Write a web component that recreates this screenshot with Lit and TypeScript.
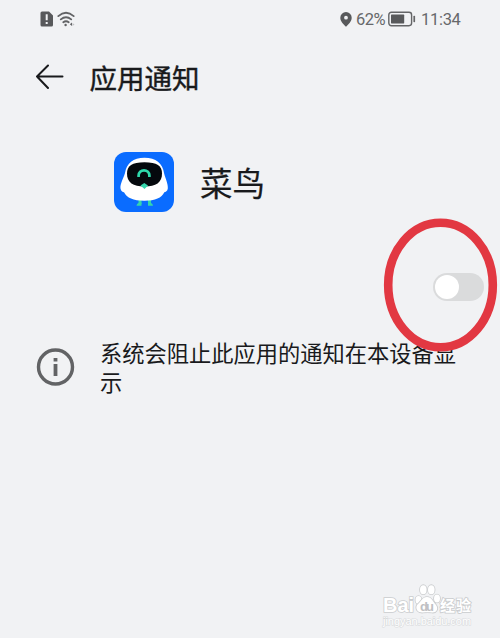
import { LitElement, html, css } from "lit";
import { customElement, property } from "lit/decorators.js";

@customElement("status-bar")
class StatusBar extends LitElement {
  static styles = css`
    :host { display: flex; align-items: center; height: 38px; padding: 0 40px; color: #67686a; box-sizing: border-box; font: 16.5px/20px Roboto, "Noto Sans", sans-serif; }
    svg { display: block; flex: none; }
    .sim { margin-right: 4px; }
    .spacer { flex: 1; }
    .pin { margin-right: 4px; }
    .percent { width: 29px; letter-spacing: -0.5px; white-space: nowrap; }
    .battery { margin: 0 5px 0 3px; }
    .time { width: 39px; letter-spacing: -0.3px; white-space: nowrap; }
    .percent, .time { padding-top: 1px; }
  `;
  render() {
    return html`
      <svg class="sim" width="13" height="16" viewBox="0 0 13 16">
        <path d="M2 .5H9L13 4.500V14a1.500 1.500 0 0 1-1.500 1.500H2A1.500 1.500 0 0 1 .5 14V2A1.500 1.500 0 0 1 2 .5Z" fill="#58595b" />
        <path d="M5.700 3.300H7.700V9.300H5.700ZM5.700 11H7.700V13H5.700Z" fill="#f1f2f4" />
      </svg>
      <svg width="18" height="16" viewBox="0 0 18 16" fill="none" stroke="#626365" stroke-width="1.800" stroke-linecap="round">
        <path d="M1.300 5.100Q9 -1.500 16.700 5.100M3.800 8.400Q9 4 14.200 8.400M6.300 11.300Q9 9.200 11.700 11.300" />
        <circle cx="8.600" cy="14" r="1.200" fill="#626365" stroke="none" />
        <path d="M12.800 13.200L15 11.500V15Z" fill="#626365" stroke="none" />
        <path d="M15.500 12V15L17.500 13.600Z" fill="#bfc0c2" stroke="none" />
      </svg>
      <span class="spacer"></span>
      <svg class="pin" width="12" height="15" viewBox="0 0 12 15">
        <path fill-rule="evenodd" d="M6 0a5.700 5.700 0 0 1 5.700 5.700C11.700 9.500 8 12.700 6 14.800 4 12.700.3 9.500.3 5.700A5.700 5.700 0 0 1 6 0ZM6 3.800a1.900 1.900 0 1 0 0 3.800 1.900 1.900 0 0 0 0-3.800Z" fill="#58595b" />
      </svg>
      <span class="percent">62%</span>
      <svg class="battery" width="28" height="16" viewBox="0 0 28 16">
        <rect x=".8" y="1.300" width="22.800" height="13.400" rx="2.600" fill="none" stroke="#646567" stroke-width="1.400" />
        <rect x="3" y="3.600" width="13.200" height="8.800" rx=".6" fill="#58595b" />
        <rect x="25.400" y="4.800" width="1.700" height="6.500" rx=".7" fill="#646567" />
      </svg>
      <span class="time">11:34</span>
    `;
  }
}

@customElement("toggle-switch")
class ToggleSwitch extends LitElement {
  @property({ type: Boolean }) checked = false;
  static styles = css`
    :host { display: block; }
    .track { display: flex; width: 51px; height: 28px; padding: 2px; border-radius: 14px; background: #dadbdc; box-sizing: border-box; }
    .track.on { justify-content: flex-end; background: #0a6cff; }
    .thumb { width: 24px; height: 24px; border-radius: 50%; background: #fff; }
  `;
  render() {
    return html`<div class="track ${this.checked ? "on" : ""}"><div class="thumb"></div></div>`;
  }
}

@customElement("app-root")
class AppRoot extends LitElement {
  static styles = css`
    :host { display: block; position: relative; width: 500px; height: 638px; overflow: hidden; background: #f1f2f4; color: #191a1c; font-family: "Noto Sans CJK SC", sans-serif; }
    svg { display: block; flex: none; }
    .header { display: flex; align-items: center; height: 80px; padding-left: 36px; box-sizing: border-box; }
    .title { margin: -2px 0 0 25.5px; font-size: 27.5px; line-height: 40px; font-weight: 400; -webkit-text-stroke: 0.4px #191a1c; }
    .app { display: flex; align-items: center; height: 60px; margin-top: 34px; padding-left: 114px; }
    .name { margin-left: 26px; font-size: 32.5px; line-height: 48px; -webkit-text-stroke: 0.2px #191a1c; }
    .row { display: flex; justify-content: flex-end; margin-top: 61px; padding-right: 16px; }
    .note { display: flex; align-items: center; margin-top: 37px; padding-left: 36px; }
    .text { width: 358px; margin: 0 0 0 25px; font-size: 22.25px; line-height: 29px; }
    .ring { position: absolute; left: 380px; top: 214px; }
    .mark { position: absolute; left: 380px; top: 580px; }
    .brand { font: bold 21px "Liberation Sans", sans-serif; }
    .du { font: bold 13px "Liberation Sans", sans-serif; }
    .cn { font: bold 15px "Noto Sans CJK SC", sans-serif; }
    .url { font: 10.5px "Liberation Sans", sans-serif; }
  `;
  render() {
    return html`
      <status-bar></status-bar>
      <div class="header">
        <svg width="28" height="28" viewBox="0 0 28 28" fill="none" stroke="#191a1c" stroke-width="2" stroke-linecap="round" stroke-linejoin="round">
          <path d="M26.500 12.500H1M12 1.500L1 12.500 12 24" />
        </svg>
        <h1 class="title">应用通知</h1>
      </div>
      <div class="app">
        <svg width="60" height="60" viewBox="0 0 60 60">
          <rect width="60" height="60" rx="12" fill="#0a6cff" />
          <path d="M26 47V52M35.500 47V52" stroke="#35d6ac" stroke-width="3" />
          <path d="M22.500 53.800Q23 50.500 27.500 50.500V53.800ZM34 53.800V50.500Q38.500 50.500 39 53.800Z" fill="#35d6ac" />
          <path d="M30.500 5.800C42 5.800 48.500 11.500 50 21 51.500 27 54.300 32 53.800 36.500 53.500 39.300 51.500 40 50.300 40.300 47.500 46 41.500 48.700 30.300 48.700S13 46 10 40.300C8.500 40 7 39.300 6.500 36.500 6 32 9.200 27 11 21 12.500 11.500 19 5.800 30.500 5.800Z" fill="#fff" />
          <path d="M30.500 10.200C43 10.200 48 13.500 48 21.500 48 30.500 42 34.500 30.500 34.500S13 30.500 13 21.500C13 13.500 18 10.200 30.500 10.200Z" fill="#05090d" />
          <path d="M24.600 25V23.500a5.400 5.200 0 0 1 10.800 0V25" fill="none" stroke="#2fd9ac" stroke-width="2.700" />
          <path d="M26.500 33.500L30.300 31 34 33.500 30.500 37Z" fill="#36d5ab" />
        </svg>
        <span class="name">菜鸟</span>
      </div>
      <div class="row"><toggle-switch></toggle-switch></div>
      <div class="note">
        <svg width="39" height="39" viewBox="0 0 39 39">
          <circle cx="19.500" cy="19" r="17" fill="none" stroke="#626365" stroke-width="3.400" />
          <path d="M17.600 10H21.400V13.500H17.600ZM17.600 16H21.400V28H17.600Z" fill="#626365" />
        </svg>
        <p class="text">系统会阻止此应用的通知在本设备显示</p>
      </div>
      <svg class="ring" width="120" height="142" viewBox="0 0 120 142">
        <ellipse cx="60.500" cy="71" rx="52.300" ry="62.300" fill="none" stroke="#e23842" stroke-width="8.600" />
      </svg>
      <svg class="mark" width="120" height="54" viewBox="0 0 120 54" fill="#fff" stroke="#cbcdcf" stroke-width="1.700" paint-order="stroke">
        <text class="brand" x="3" y="32" textLength="31" lengthAdjust="spacingAndGlyphs">Bai</text>
        <ellipse cx="38.500" cy="20" rx="3" ry="4" />
        <ellipse cx="43.300" cy="9.700" rx="3.300" ry="4.500" />
        <ellipse cx="51.300" cy="9.700" rx="3.300" ry="4.500" />
        <ellipse cx="57" cy="18.500" rx="3" ry="4" />
        <path d="M47 17C52 17 53 22 56 25 59 29 56 33 52 32.500 49 32 46 32 43 32.500 38 33 35 29 37 25 41 22 42 17 47 17Z" />
        <text class="du" x="40" y="31" textLength="14" fill="#bfc1c3" stroke="none">du</text>
        <text class="cn" x="60" y="30.500" textLength="31">经验</text>
        <text class="url" x="3" y="45" textLength="88" lengthAdjust="spacingAndGlyphs" stroke="#d9dbdd" stroke-width="1.200">jingyan.baidu.com</text>
      </svg>
    `;
  }
}
